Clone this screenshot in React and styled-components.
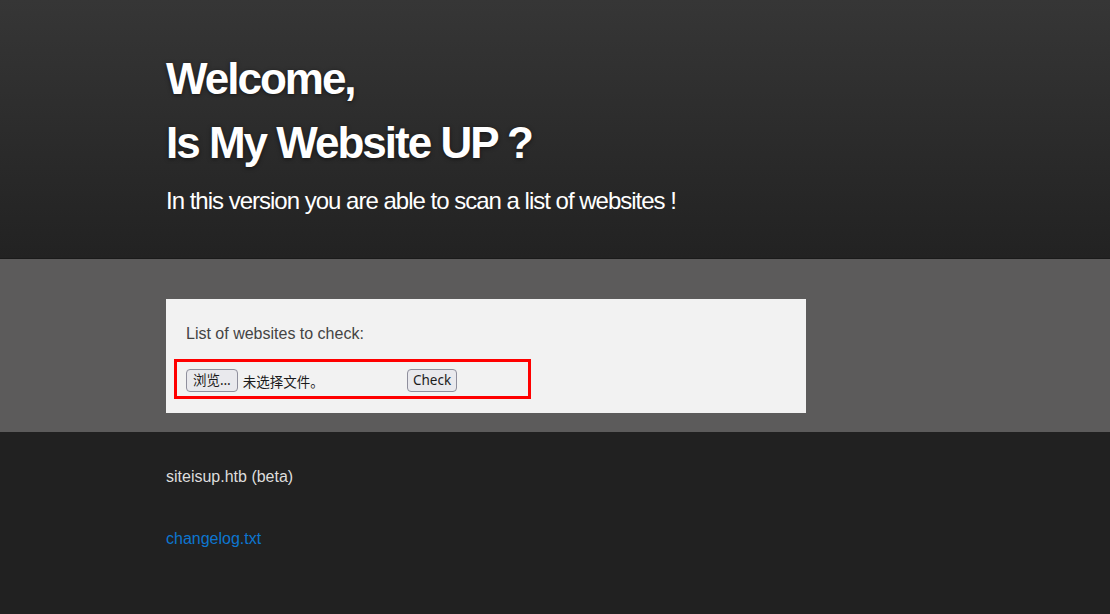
import React from "react";
import styled, { createGlobalStyle } from "styled-components";

const GlobalStyle = createGlobalStyle`
  html, body {
    margin: 0;
    padding: 0;
    background: #212121;
    font-family: "Liberation Sans", Arial, Helvetica, sans-serif;
  }
`;

const Header = styled.header`
  background: linear-gradient(to bottom, #363636 0%, #222222 100%);
  border-bottom: 1px solid #1a1a1a;
  height: 259px;
  box-sizing: border-box;
  padding-top: 47px;
`;

const Container = styled.div`
  width: 778px;
  margin: 0 auto;
`;

const Title = styled.h1`
  margin: 0;
  color: #ffffff;
  font-size: 44px;
  line-height: 64px;
  font-weight: bold;
  letter-spacing: -2px;
  text-shadow: 0 1px 4px rgba(0, 0, 0, 0.55);
`;

const Subtitle = styled.p`
  margin: 12px 0 0;
  color: #ffffff;
  font-size: 24px;
  line-height: 28px;
  letter-spacing: -1px;
`;

const Band = styled.section`
  background: #5c5b5b;
  padding: 40px 0 19px;
`;

const Card = styled.div`
  width: 640px;
  background: #f2f2f2;
  box-sizing: border-box;
  padding: 25px 20px 14px 8px;
`;

const Label = styled.div`
  color: #444444;
  font-size: 16px;
  line-height: 19px;
  padding-left: 12px;
`;

const Form = styled.form`
  margin-top: 16px;
  width: 357px;
  box-sizing: border-box;
  border: 3px solid #ff0000;
  padding: 7px 9px 4px;
  display: flex;
  align-items: center;
`;

const FileInput = styled.div`
  width: 217px;
  display: flex;
  align-items: center;
  gap: 5px;
  font-family: "Noto Sans CJK SC", "Noto Sans", sans-serif;
  font-size: 13.5px;
  color: #1b1b1b;
`;

const Button = styled.button`
  height: 23px;
  box-sizing: border-box;
  padding: 0 ${(p) => (p.spaced ? "5px" : "6px")};
  background: #e9e9ed;
  border: 1px solid #8f8f9d;
  border-radius: 4px;
  font-family: "Noto Sans", "Noto Sans CJK SC", sans-serif;
  font-size: 13.5px;
  color: #1b1b1b;
  line-height: 21px;
  margin-left: ${(p) => (p.spaced ? "4px" : "0")};
`;

const Footer = styled.footer`
  background: #212121;
  padding: 35px 0 60px;
`;

const FooterText = styled.div`
  color: #dddddd;
  font-size: 16px;
  line-height: 19px;
`;

const FooterLink = styled.a`
  display: inline-block;
  margin-top: 43px;
  color: #0d76d0;
  font-size: 16px;
  line-height: 19px;
  text-decoration: none;
`;

export default function App() {
  return (
    <>
      <GlobalStyle />
      <Header>
        <Container>
          <Title>
            Welcome,
            <br />
            Is My Website UP ?
          </Title>
          <Subtitle>In this version you are able to scan a list of websites !</Subtitle>
        </Container>
      </Header>
      <Band>
        <Container>
          <Card>
            <Label>List of websites to check:</Label>
            <Form onSubmit={(e) => e.preventDefault()}>
              <FileInput>
                <Button type="button">浏览…</Button>
                <span>未选择文件。</span>
              </FileInput>
              <Button type="submit" spaced>
                Check
              </Button>
            </Form>
          </Card>
        </Container>
      </Band>
      <Footer>
        <Container>
          <FooterText>siteisup.htb (beta)</FooterText>
          <FooterLink href="#">changelog.txt</FooterLink>
        </Container>
      </Footer>
    </>
  );
}
